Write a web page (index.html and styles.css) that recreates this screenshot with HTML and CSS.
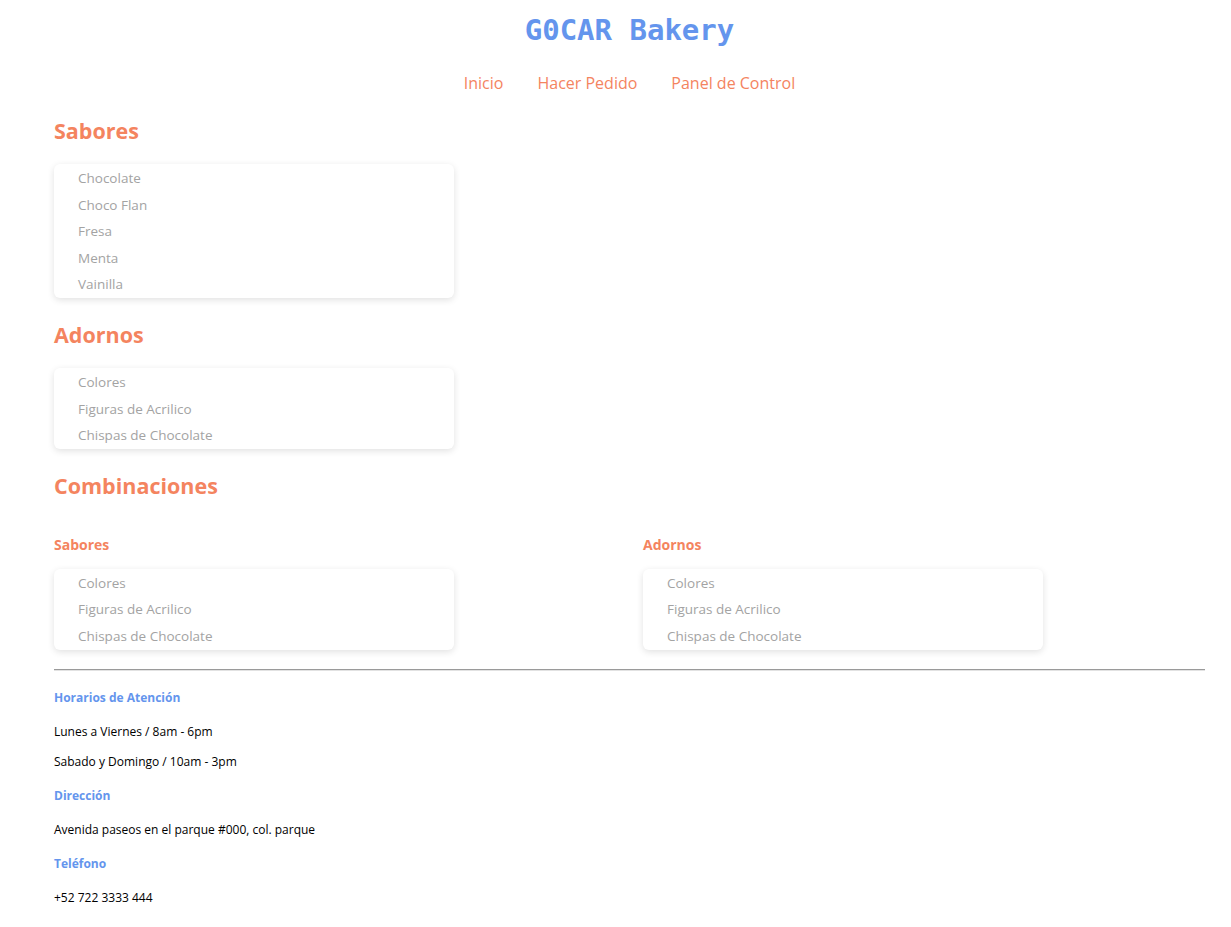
FILE: index.html
```html
<!DOCTYPE html>
<html lang="es">
<head>
<meta charset="utf-8">
<title>G0CAR Bakery</title>
<link rel="stylesheet" href="styles.css">
</head>
<body>
<div class="page">
  <header class="header">
    <h1 class="brand">G0CAR Bakery</h1>
    <nav class="nav">
      <a href="#">Inicio</a>
      <a href="#">Hacer Pedido</a>
      <a href="#">Panel de Control</a>
    </nav>
  </header>

  <section class="section">
    <h2 class="section-title">Sabores</h2>
    <ul class="list-card">
      <li>Chocolate</li>
      <li>Choco Flan</li>
      <li>Fresa</li>
      <li>Menta</li>
      <li>Vainilla</li>
    </ul>
  </section>

  <section class="section">
    <h2 class="section-title">Adornos</h2>
    <ul class="list-card">
      <li>Colores</li>
      <li>Figuras de Acrilico</li>
      <li>Chispas de Chocolate</li>
    </ul>
  </section>

  <section class="section">
    <h2 class="section-title">Combinaciones</h2>
    <div class="combo-grid">
      <div class="combo-col">
        <h3 class="sub-title">Sabores</h3>
        <ul class="list-card">
          <li>Colores</li>
          <li>Figuras de Acrilico</li>
          <li>Chispas de Chocolate</li>
        </ul>
      </div>
      <div class="combo-col">
        <h3 class="sub-title">Adornos</h3>
        <ul class="list-card">
          <li>Colores</li>
          <li>Figuras de Acrilico</li>
          <li>Chispas de Chocolate</li>
        </ul>
      </div>
    </div>
  </section>

  <hr class="divider">

  <footer class="footer">
    <h4 class="footer-title">Horarios de Atención</h4>
    <p>Lunes a Viernes / 8am - 6pm</p>
    <p>Sabado y Domingo / 10am - 3pm</p>
    <h4 class="footer-title">Dirección</h4>
    <p>Avenida paseos en el parque #000, col. parque</p>
    <h4 class="footer-title">Teléfono</h4>
    <p>+52 722 3333 444</p>
  </footer>
</div>
</body>
</html>
```
FILE: styles.css
```css
* { box-sizing: border-box; }

html, body {
  margin: 0;
  padding: 0;
  background: #ffffff;
}

body {
  font-family: "Open Sans", "Noto Sans", sans-serif;
  color: #000;
}

.page {
  padding: 0 26px 20px 54px;
  display: flex;
  flex-direction: column;
}

.header {
  display: flex;
  flex-direction: column;
  align-items: center;
}

.brand {
  margin: 12px 0 0;
  font-family: "DejaVu Sans Mono", "Liberation Mono", monospace;
  font-size: 29px;
  line-height: 36px;
  font-weight: bold;
  color: #6495ed;
}

.nav {
  margin-top: 23px;
  display: flex;
  gap: 34px;
}

.nav a {
  color: #f4845f;
  text-decoration: none;
  font-size: 16px;
  line-height: 24px;
}

.section {
  display: flex;
  flex-direction: column;
}

.section-title {
  margin: 0;
  color: #f4845f;
  font-size: 21.5px;
  line-height: 30px;
  font-weight: bold;
}

.section:nth-of-type(1) .section-title { margin-top: 21px; }
.section .section-title { margin-top: 22px; }

.section > .list-card { margin-top: 18px; }

.list-card {
  list-style: none;
  margin: 0;
  padding: 1px 0 0 24px;
  width: 400px;
  background: #fff;
  border-radius: 6px;
  box-shadow: 0 2px 7px rgba(0, 0, 0, 0.12);
}

.list-card li {
  font-size: 13.5px;
  line-height: 27px;
  height: 26.6px;
  color: #a3a3a3;
}

.combo-grid {
  display: grid;
  grid-template-columns: 589px 1fr;
  margin-top: 34px;
}

.sub-title {
  margin: 0 0 14px;
  color: #f4845f;
  font-size: 14px;
  line-height: 20px;
  font-weight: bold;
}

.divider {
  margin: 19px 0 0;
  border: 0;
  border-top: 1px solid #9a9a9a;
  border-bottom: 1px solid #e2e2e2;
  height: 0;
}

.footer {
  display: flex;
  flex-direction: column;
  padding-top: 18px;
}

.footer-title {
  margin: 0;
  color: #6495ed;
  font-size: 12px;
  line-height: 18px;
  font-weight: bold;
}

.footer p {
  margin: 0;
  font-size: 12px;
  line-height: 18px;
}

.footer-title + p { margin-top: 16px; }
.footer p + p { margin-top: 12px; }
.footer p + .footer-title { margin-top: 16px; }
```
